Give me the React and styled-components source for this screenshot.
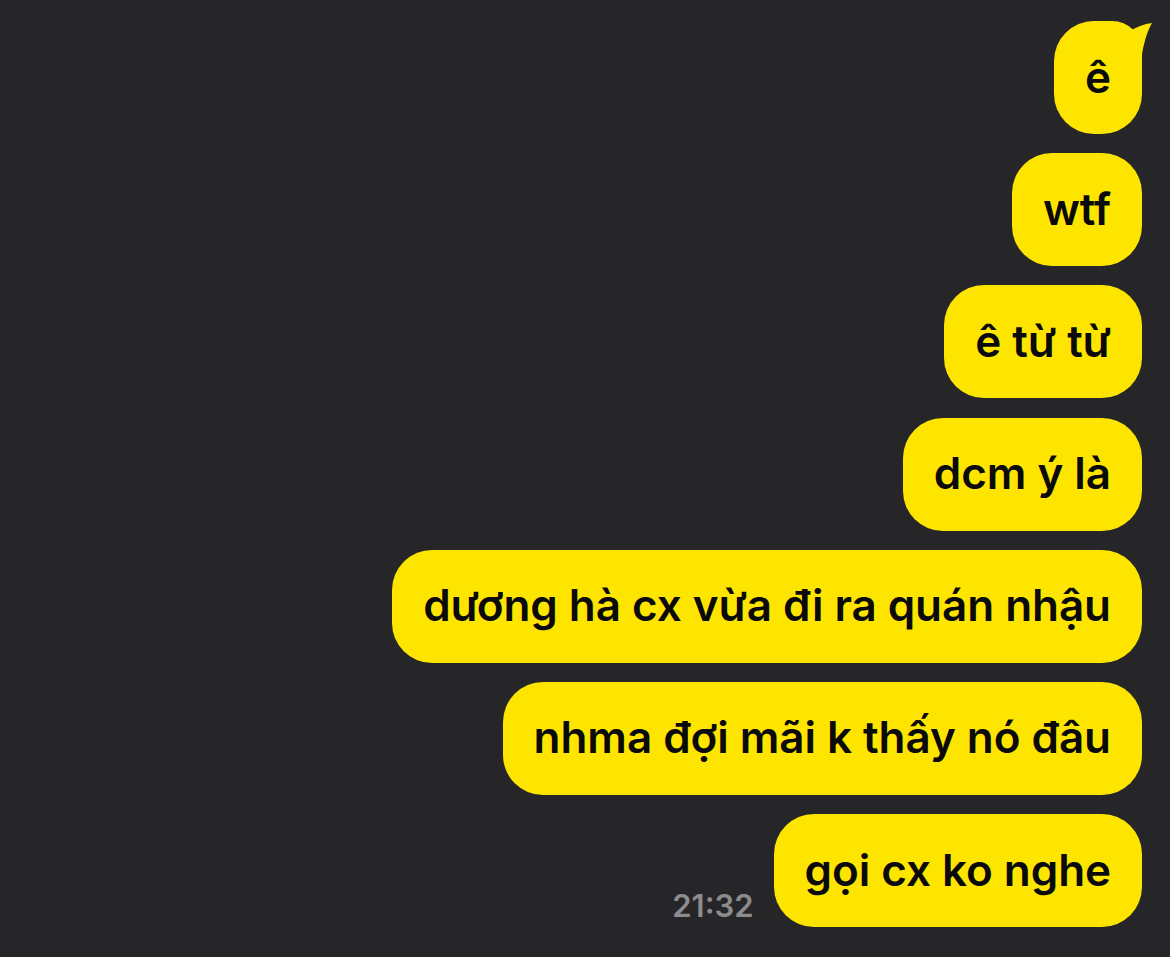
import React from "react";
import styled, { createGlobalStyle } from "styled-components";

const Global = createGlobalStyle`
  html, body { margin: 0; padding: 0; background: #262628; }
  body { font-family: Inter, "Noto Sans", "Liberation Sans", sans-serif; }
`;

const Screen = styled.div`
  min-height: 957px;
  box-sizing: border-box;
  background: #262628;
  display: flex;
  flex-direction: column;
  align-items: flex-end;
  gap: 19.2px;
  padding: 21px 28px 0 0;
`;

const Row = styled.div`
  display: flex;
  align-items: flex-end;
  gap: 20px;
`;

const Bubble = styled.div`
  position: relative;
  box-sizing: border-box;
  height: 113px;
  display: flex;
  align-items: center;
  padding: 0 31px 2px 31px;
  background: #fee500;
  color: #0a0a0a;
  font-size: 44px;
  font-weight: 600;
  letter-spacing: -0.05px;
  white-space: nowrap;
  border-radius: ${(p) => (p.$tail ? "40px 30px 40px 40px" : "40px")};
`;

const Tail = styled.svg`
  position: absolute;
  top: -3px;
  right: -14px;
  width: 32px;
  height: 40px;
  overflow: visible;
`;

const Time = styled.span`
  color: #8c8c8e;
  font-size: 31px;
  font-weight: 600;
  line-height: 1;
  margin-bottom: 6px;
`;

const messages = [
  "ê",
  "wtf",
  "ê từ từ",
  "dcm ý là",
  "dương hà cx vừa đi ra quán nhậu",
  "nhma đợi mãi k thấy nó đâu",
  "gọi cx ko nghe",
];

export default function App() {
  return (
    <>
      <Global />
      <Screen>
        {messages.map((m, i) => (
          <Row key={i}>
            {i === messages.length - 1 && <Time>21:32</Time>}
            <Bubble $tail={i === 0}>
              {m}
              {i === 0 && (
                <Tail viewBox="0 0 32 40">
                  <path
                    d="M6,13 C12,9 20,6 28,5 C24,12 21,20 18,36 L2,36 Z"
                    fill="#fee500"
                  />
                </Tail>
              )}
            </Bubble>
          </Row>
        ))}
      </Screen>
    </>
  );
}
